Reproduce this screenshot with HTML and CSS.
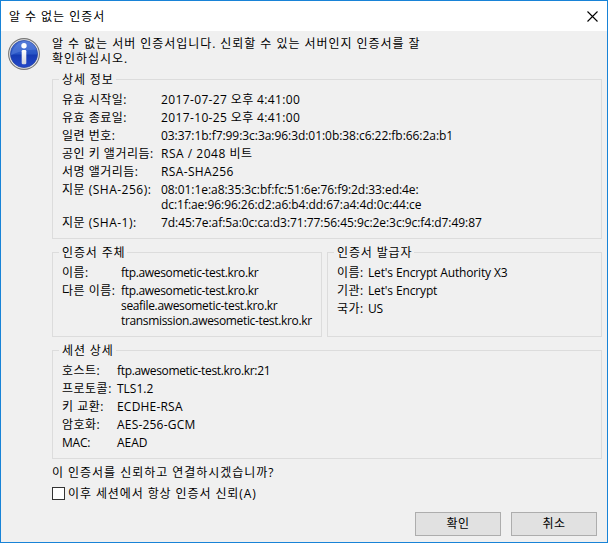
FILE: index.html
```html
<!DOCTYPE html>
<html lang="ko">
<head>
<meta charset="utf-8">
<title>알 수 없는 인증서</title>
<link rel="stylesheet" href="styles.css">
</head>
<body>
<div class="dialog">
  <header class="titlebar">
    <span>알 수 없는 인증서</span>
    <svg class="close" width="11" height="11" viewBox="0 0 11 11"><path d="M.5.5l10 10M10.5.5l-10 10" stroke="#000" stroke-width="1.1"/></svg>
  </header>
  <main class="content">
    <svg class="info" width="32" height="32" viewBox="0 0 32 32">
      <defs>
        <linearGradient id="blue" x1="0" y1="0" x2="0" y2="1"><stop offset="0" stop-color="#4770d4"/><stop offset=".48" stop-color="#2856c6"/><stop offset=".55" stop-color="#153bb4"/><stop offset="1" stop-color="#2448c9"/></linearGradient>
        <linearGradient id="stem" x1="0" y1="0" x2="0" y2="1"><stop offset="0" stop-color="#fff"/><stop offset="1" stop-color="#cfd2dc"/></linearGradient>
      </defs>
      <circle cx="16" cy="16" r="15.4" fill="#e8e8e8" stroke="#777" stroke-width="1.1"/>
      <circle cx="16" cy="16" r="13.6" fill="url(#blue)" stroke="#24409b" stroke-width=".7"/>
      <path d="M2.8 17.5C5 8 11 4 16 3c7 0 11 4 12.5 8.500-8 .5-17 1-25.700 6z" fill="#7395e6" opacity=".35"/>
      <circle cx="16" cy="7.800" r="2.700" fill="#fff"/>
      <rect x="13.700" y="12" width="4.600" height="14.300" rx="1.200" fill="url(#stem)"/>
    </svg>
    <div class="body">
      <p class="message">알 수 없는 서버 인증서입니다. 신뢰할 수 있는 서버인지 인증서를 잘<br>확인하십시오.</p>
      <section class="group details">
        <h2>상세 정보</h2>
        <dl>
          <dt>유효 시작일:</dt><dd class="date">2017-07-27 오후 4:41:00</dd>
          <dt>유효 종료일:</dt><dd class="date">2017-10-25 오후 4:41:00</dd>
          <dt>일련 번호:</dt><dd class="hex">03:37:1b:f7:99:3c:3a:96:3d:01:0b:38:c6:22:fb:66:2a:b1</dd>
          <dt>공인 키 앨거리듬:</dt><dd class="bits">RSA / 2048 비트</dd>
          <dt>서명 앨거리듬:</dt><dd class="date">RSA-SHA256</dd>
          <dt>지문 (SHA-256):</dt><dd class="hex">08:01:1e:a8:35:3c:bf:fc:51:6e:76:f9:2d:33:ed:4e:<br>dc:1f:ae:96:96:26:d2:a6:b4:dd:67:a4:4d:0c:44:ce</dd>
          <dt>지문 (SHA-1):</dt><dd class="hex">7d:45:7e:af:5a:0c:ca:d3:71:77:56:45:9c:2e:3c:9c:f4:d7:49:87</dd>
        </dl>
      </section>
      <div class="parties">
        <section class="group subject">
          <h2>인증서 주체</h2>
          <dl>
            <dt>이름:</dt><dd class="host">ftp.awesometic-test.kro.kr</dd>
            <dt>다른 이름:</dt><dd class="host">ftp.awesometic-test.kro.kr<br>seafile.awesometic-test.kro.kr<br>transmission.awesometic-test.kro.kr</dd>
          </dl>
        </section>
        <section class="group issuer">
          <h2>인증서 발급자</h2>
          <dl>
            <dt>이름:</dt><dd>Let's Encrypt Authority X3</dd>
            <dt>기관:</dt><dd>Let's Encrypt</dd>
            <dt>국가:</dt><dd>US</dd>
          </dl>
        </section>
      </div>
      <section class="group session">
        <h2>세션 상세</h2>
        <dl>
          <dt>호스트:</dt><dd class="host">ftp.awesometic-test.kro.kr:21</dd>
          <dt>프로토콜:</dt><dd>TLS1.2</dd>
          <dt>키 교환:</dt><dd class="cipher">ECDHE-RSA</dd>
          <dt>암호화:</dt><dd class="cipher">AES-256-GCM</dd>
          <dt class="latin">MAC:</dt><dd>AEAD</dd>
        </dl>
      </section>
      <p class="question">이 인증서를 신뢰하고 연결하시겠습니까?</p>
      <label class="trust"><input type="checkbox"><span>이후 세션에서 항상 인증서 신뢰(A)</span></label>
    </div>
  </main>
  <footer class="actions"><button>확인</button><button>취소</button></footer>
</div>
</body>
</html>
```
FILE: styles.css
```css
* { box-sizing: border-box; margin: 0; padding: 0; }
body, button { font: 12px/15px "Open Sans", "Noto Sans CJK KR", sans-serif; color: #000; }
.dialog { width: 608px; height: 543px; border: 1px solid #1883d7; background: #f0f0f0; display: flex; flex-direction: column; white-space: nowrap; }
.titlebar { height: 30px; background: #fff; display: flex; align-items: center; justify-content: space-between; padding: 0 9px 0 8px; letter-spacing: .95px; }
.content { display: flex; flex: 1; padding: 5px 5px 0 7px; gap: 12px; }
.info { flex: none; margin-top: 2px; }
.body { flex: 1; min-width: 0; }
.message { height: 30px; margin-bottom: 13px; letter-spacing: .95px; }
.group { border: 1px solid #dcdcdc; padding: 0 0 0 9px; }
.group h2 { font-size: 12px; font-weight: 400; line-height: 15px; width: max-content; margin: -8px 0 5px -3px; padding: 0 2px 0 3px; background: #f0f0f0; letter-spacing: .85px; }
dl { display: grid; row-gap: 3px; align-content: start; }
dt { letter-spacing: .5px; }
dt.latin { letter-spacing: -.2px; }
.date { letter-spacing: .37px; }
.bits { letter-spacing: .52px; }
.hex { letter-spacing: -.05px; }
.host { letter-spacing: -.34px; }
.cipher { letter-spacing: .2px; }
.details { height: 160px; margin-bottom: 13px; }
.details dl { grid-template-columns: 99px auto; }
.parties { display: grid; grid-template-columns: 270px 275px; gap: 5px; height: 85px; margin-bottom: 13px; }
.subject dl { grid-template-columns: 59px auto; }
.issuer dl { grid-template-columns: 31px auto; }
.issuer dd { letter-spacing: -.14px; }
.session { height: 109px; margin-bottom: 6px; }
.session dl { grid-template-columns: 55px auto; }
.question { letter-spacing: .96px; }
.trust { display: flex; align-items: center; gap: 3px; margin-top: 6px; letter-spacing: .9px; }
.trust input { appearance: none; width: 13px; height: 13px; border: 1px solid #333; background: #fff; }
.actions { display: flex; justify-content: flex-end; gap: 10px; padding: 0 10px 6px 0; }
.actions button { width: 86px; height: 24px; border: 1px solid #adadad; background: #e1e1e1; letter-spacing: .5px; padding-bottom: 2px; }
```
